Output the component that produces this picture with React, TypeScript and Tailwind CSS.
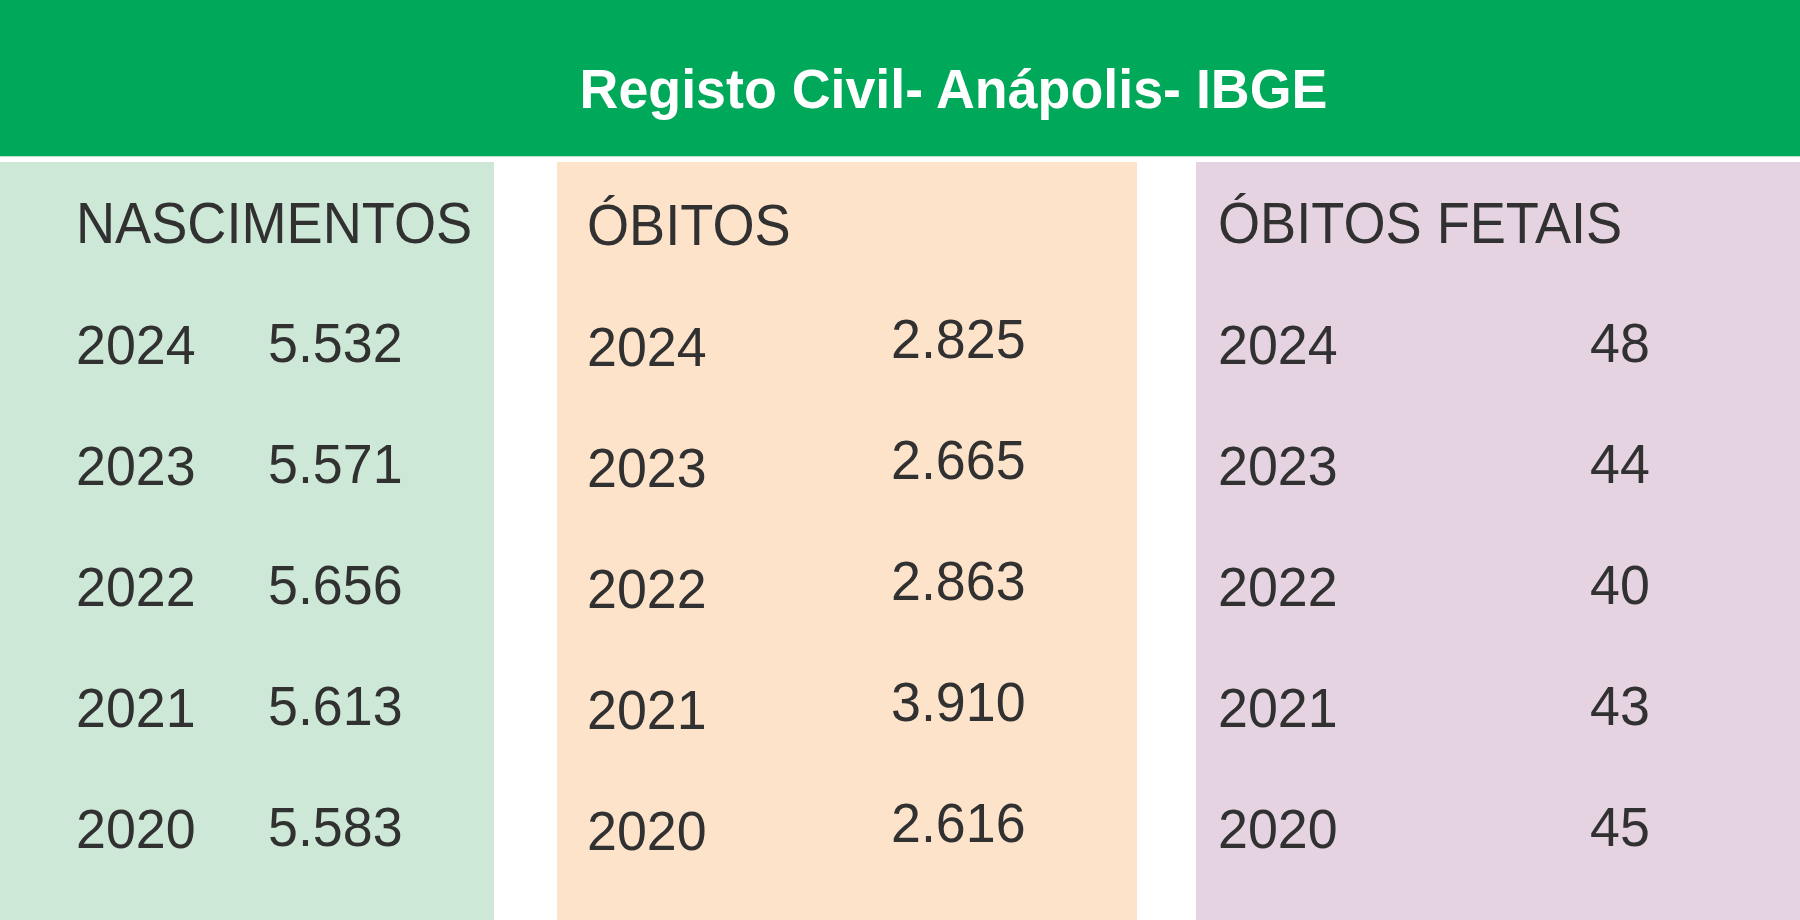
import React from "react";

type Col = {
  bg: string;
  width: string;
  pl: string;
  pt: string;
  yearW: string;
  yearShift: string;
  valueShift: string;
  title: string;
  rows: [string, string][];
};

const txt = "inline-block origin-left scale-x-[0.96] leading-[56px]";

function Column({ c }: { c: Col }) {
  return (
    <div className={`${c.bg} ${c.width} ${c.pl} ${c.pt} h-full shrink-0`}>
      <div className="h-[122px]">
        <span className="inline-block origin-left scale-x-[0.95] leading-[56px] text-[57px] whitespace-nowrap">
          {c.title}
        </span>
      </div>
      {c.rows.map(([y, v]) => (
        <div key={y} className="h-[121px] flex items-start">
          <div className={`${c.yearW} ${c.yearShift} shrink-0`}>
            <span className={`${txt} text-[56px]`}>{y}</span>
          </div>
          <div className={c.valueShift}>
            <span className={`${txt} text-[56px]`}>{v}</span>
          </div>
        </div>
      ))}
    </div>
  );
}

const cols: Col[] = [
  {
    bg: "bg-[#cde8d7]",
    width: "w-[494px]",
    pl: "pl-[76px]",
    pt: "pt-[33px]",
    yearW: "w-[192px]",
    yearShift: "mt-0",
    valueShift: "-mt-[2px]",
    title: "NASCIMENTOS",
    rows: [
      ["2024", "5.532"],
      ["2023", "5.571"],
      ["2022", "5.656"],
      ["2021", "5.613"],
      ["2020", "5.583"],
    ],
  },
  {
    bg: "bg-[#fee3cb]",
    width: "w-[580px]",
    pl: "pl-[30px]",
    pt: "pt-[35px]",
    yearW: "w-[304px]",
    yearShift: "mt-0",
    valueShift: "-mt-[8px]",
    title: "ÓBITOS",
    rows: [
      ["2024", "2.825"],
      ["2023", "2.665"],
      ["2022", "2.863"],
      ["2021", "3.910"],
      ["2020", "2.616"],
    ],
  },
  {
    bg: "bg-[#e6d3e2]",
    width: "flex-1",
    pl: "pl-[22px]",
    pt: "pt-[33px]",
    yearW: "w-[372px]",
    yearShift: "mt-0",
    valueShift: "-mt-[2px]",
    title: "ÓBITOS FETAIS",
    rows: [
      ["2024", "48"],
      ["2023", "44"],
      ["2022", "40"],
      ["2021", "43"],
      ["2020", "45"],
    ],
  },
];

export default function App() {
  return (
    <div
      className="w-[1800px] h-[920px] overflow-hidden bg-white flex flex-col text-[#313131]"
      style={{ fontFamily: '"Liberation Sans", Arial, sans-serif' }}
    >
      <div className="h-[157px] shrink-0 bg-[#00a859] pt-[61px] pl-[106px] text-center border-b border-[#b9e3cb]">
        <span className="inline-block origin-center scale-x-[0.96] text-[56px] leading-[56px] font-bold text-white whitespace-nowrap">
          Registo Civil- Anápolis- IBGE
        </span>
      </div>
      <div className="flex-1 mt-[5px] flex gap-0">
        <Column c={cols[0]} />
        <div className="w-[63px] shrink-0" />
        <Column c={cols[1]} />
        <div className="w-[59px] shrink-0" />
        <Column c={cols[2]} />
      </div>
    </div>
  );
}
